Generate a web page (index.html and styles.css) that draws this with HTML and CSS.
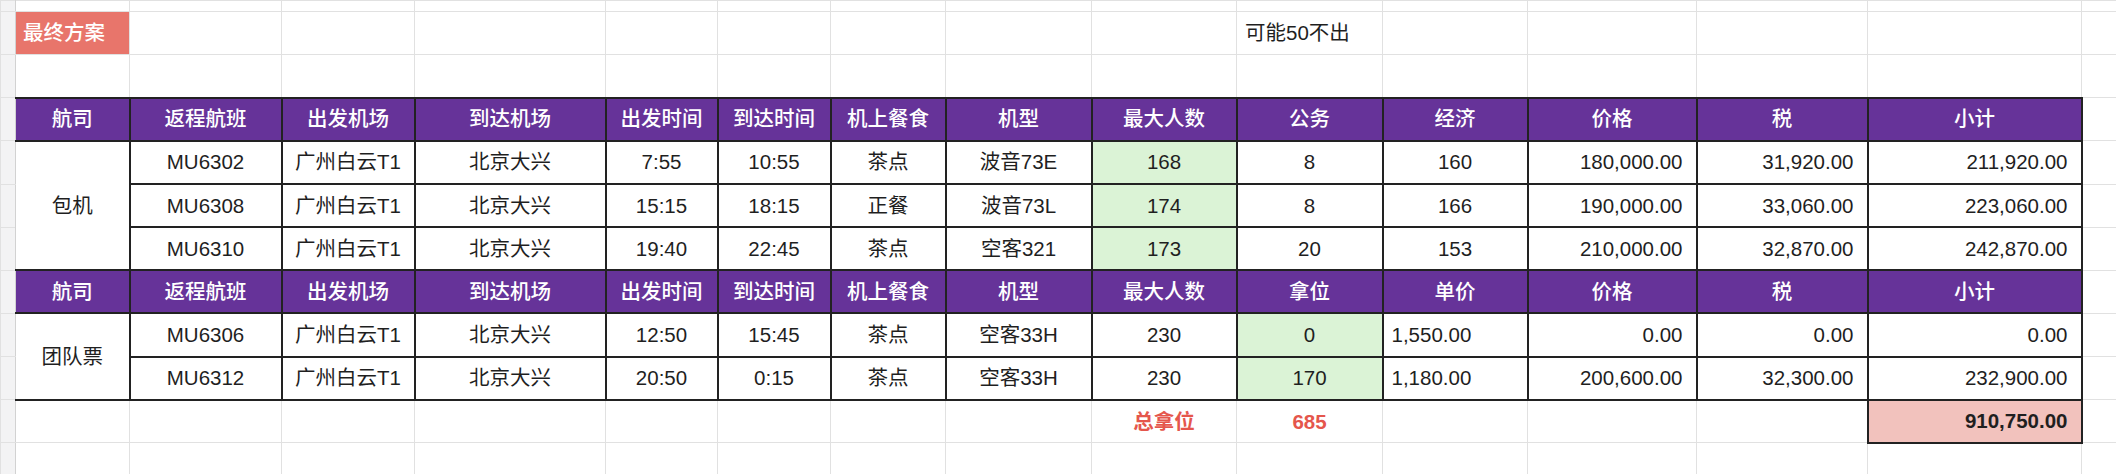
FILE: index.html
```html
<!DOCTYPE html>
<html lang="zh-CN">
<head>
<meta charset="utf-8">
<title>最终方案</title>
<link rel="stylesheet" href="styles.css">
</head>
<body>
<table class="sheet">
  <colgroup>
    <col class="w-g"><col class="w1"><col class="w2"><col class="w3"><col class="w4"><col class="w5"><col class="w6"><col class="w7"><col class="w8"><col class="w9"><col class="w10"><col class="w11"><col class="w12"><col class="w13"><col class="w14"><col class="w-e">
  </colgroup>
  <tbody>
    <tr class="top">
      <td class="g"></td><td></td><td></td><td></td><td></td><td></td><td></td><td></td><td></td><td></td><td></td><td></td><td></td><td></td><td></td><td></td>
    </tr>
    <tr class="row">
      <td class="g"></td><td class="tag">最终方案</td><td></td><td></td><td></td><td></td><td></td><td></td><td></td><td></td><td class="left">可能50不出</td><td></td><td></td><td></td><td></td><td></td>
    </tr>
    <tr class="row">
      <td class="g"></td><td></td><td></td><td></td><td></td><td></td><td></td><td></td><td></td><td></td><td></td><td></td><td></td><td></td><td></td><td></td>
    </tr>
    <tr class="row hd">
      <td class="g"></td><td class="c1">航司</td><td>返程航班</td><td>出发机场</td><td>到达机场</td><td>出发时间</td><td>到达时间</td><td>机上餐食</td><td>机型</td><td>最大人数</td><td>公务</td><td>经济</td><td>价格</td><td>税</td><td>小计</td><td class="e"></td>
    </tr>
    <tr class="row dr">
      <td class="g"></td><td class="c1" rowspan="3">包机</td><td>MU6302</td><td>广州白云T1</td><td>北京大兴</td><td>7:55</td><td>10:55</td><td>茶点</td><td>波音73E</td><td class="green">168</td><td>8</td><td>160</td><td class="num">180,000.00</td><td class="num">31,920.00</td><td class="num">211,920.00</td><td class="e"></td>
    </tr>
    <tr class="row dr">
      <td class="g"></td><td>MU6308</td><td>广州白云T1</td><td>北京大兴</td><td>15:15</td><td>18:15</td><td>正餐</td><td>波音73L</td><td class="green">174</td><td>8</td><td>166</td><td class="num">190,000.00</td><td class="num">33,060.00</td><td class="num">223,060.00</td><td class="e"></td>
    </tr>
    <tr class="row dr">
      <td class="g"></td><td>MU6310</td><td>广州白云T1</td><td>北京大兴</td><td>19:40</td><td>22:45</td><td>茶点</td><td>空客321</td><td class="green">173</td><td>20</td><td>153</td><td class="num">210,000.00</td><td class="num">32,870.00</td><td class="num">242,870.00</td><td class="e"></td>
    </tr>
    <tr class="row hd">
      <td class="g"></td><td class="c1">航司</td><td>返程航班</td><td>出发机场</td><td>到达机场</td><td>出发时间</td><td>到达时间</td><td>机上餐食</td><td>机型</td><td>最大人数</td><td>拿位</td><td>单价</td><td>价格</td><td>税</td><td>小计</td><td class="e"></td>
    </tr>
    <tr class="row dr">
      <td class="g"></td><td class="c1" rowspan="2">团队票</td><td>MU6306</td><td>广州白云T1</td><td>北京大兴</td><td>12:50</td><td>15:45</td><td>茶点</td><td>空客33H</td><td>230</td><td class="green">0</td><td class="left">1,550.00</td><td class="num">0.00</td><td class="num">0.00</td><td class="num">0.00</td><td class="e"></td>
    </tr>
    <tr class="row dr">
      <td class="g"></td><td>MU6312</td><td>广州白云T1</td><td>北京大兴</td><td>20:50</td><td>0:15</td><td>茶点</td><td>空客33H</td><td>230</td><td class="green">170</td><td class="left">1,180.00</td><td class="num">200,600.00</td><td class="num">32,300.00</td><td class="num">232,900.00</td><td class="e"></td>
    </tr>
    <tr class="row">
      <td class="g"></td><td></td><td></td><td></td><td></td><td></td><td></td><td></td><td></td><td class="red">总拿位</td><td class="red">685</td><td></td><td></td><td></td><td class="total">910,750.00</td><td></td>
    </tr>
    <tr class="row">
      <td class="g"></td><td></td><td></td><td></td><td></td><td></td><td></td><td></td><td></td><td></td><td></td><td></td><td></td><td></td><td></td><td></td>
    </tr>
  </tbody>
</table>
</body>
</html>
```
FILE: styles.css
```css
html, body {
  margin: 0;
  padding: 0;
  background: #ffffff;
}

body {
  width: 2116px;
  height: 474px;
  overflow: hidden;
  font-family: "Liberation Sans", "Noto Sans CJK SC", sans-serif;
  font-size: 20.5px;
  color: #1f1f1f;
}

.sheet {
  border-collapse: collapse;
  table-layout: fixed;
  width: 2116px;
}

.w-g { width: 15px; }
.w1 { width: 114px; }
.w2 { width: 152px; }
.w3 { width: 133px; }
.w4 { width: 191px; }
.w5 { width: 112px; }
.w6 { width: 113px; }
.w7 { width: 115px; }
.w8 { width: 146px; }
.w9 { width: 145px; }
.w10 { width: 146px; }
.w11 { width: 145px; }
.w12 { width: 169px; }
.w13 { width: 171px; }
.w14 { width: 214px; }
.w-e { width: 35px; }

.sheet td {
  border: 1px solid #e1e1e1;
  padding: 0 8px;
  text-align: center;
  vertical-align: middle;
  white-space: nowrap;
  overflow: hidden;
  line-height: 24px;
}

.sheet tr.top { height: 11px; }
.sheet tr.row { height: 43.15px; }

.sheet td.g {
  background: #f3f3f4;
  border-right: 1px solid #d2d2d2;
  padding: 0;
}

/* table region */
.sheet tr.hd td,
.sheet tr.dr td {
  border: 2px solid #222222;
}

.sheet tr.hd td {
  background: #663399;
  color: #ffffff;
  font-weight: 500;
}

.sheet tr.hd td.g,
.sheet tr.dr td.g {
  background: #f3f3f4;
  border: 1px solid #e1e1e1;
  border-right: 1px solid #d2d2d2;
}

.sheet tr.hd td.e,
.sheet tr.dr td.e {
  background: #ffffff;
  border: 1px solid #e1e1e1;
}

.sheet tr td.c1 {
  border-left: 1px solid #d2d2d2;
}

.sheet td.tag {
  background: #e8756b;
  color: #ffffff;
  text-align: left;
  padding-left: 7px;
  font-weight: 500;
}

.sheet td.left {
  text-align: left;
}

.sheet td.num {
  text-align: right;
  padding-right: 13px;
}

.sheet td.green {
  background: #dbf3d6;
}

.sheet td.red {
  color: #e5564c;
  font-weight: 700;
}

.sheet td.total {
  background: #f2c2bd;
  font-weight: 700;
  text-align: right;
  padding-right: 13px;
  border: 2px solid #222222;
}
```
